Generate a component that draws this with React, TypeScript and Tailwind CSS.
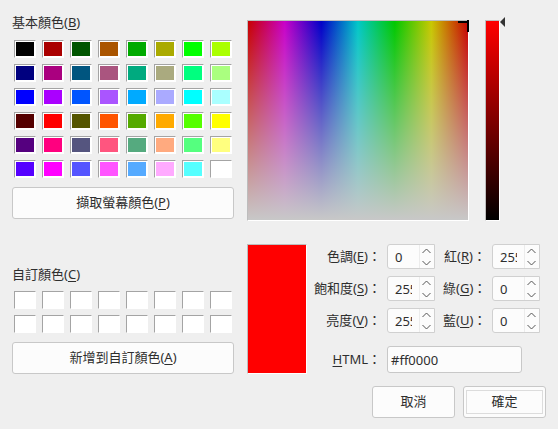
const FONT = "font-['Noto_Sans','Noto_Sans_CJK_TC',sans-serif]";

const basic = [
  '#000000', '#aa0000', '#005500', '#aa5500', '#00aa00', '#aaaa00', '#00ff00', '#aaff00',
  '#00007f', '#aa007f', '#00557f', '#aa557f', '#00aa7f', '#aaaa7f', '#00ff7f', '#aaff7f',
  '#0000ff', '#aa00ff', '#0055ff', '#aa55ff', '#00aaff', '#aaaaff', '#00ffff', '#aaffff',
  '#550000', '#ff0000', '#555500', '#ff5500', '#55aa00', '#ffaa00', '#55ff00', '#ffff00',
  '#55007f', '#ff007f', '#55557f', '#ff557f', '#55aa7f', '#ffaa7f', '#55ff7f', '#ffff7f',
  '#5500ff', '#ff00ff', '#5555ff', '#ff55ff', '#55aaff', '#ffaaff', '#55ffff', '#ffffff',
];

function Cell({ color }: { color: string }) {
  return (
    <div className="w-[22px] h-[18px] border border-t-[#a4a4a4] border-l-[#a4a4a4] border-r-white border-b-white p-px bg-white">
      <div className="w-full h-full" style={{ backgroundColor: color }} />
    </div>
  );
}

function Btn({ children, className = '' }: { children: React.ReactNode; className?: string }) {
  return (
    <div className={`flex items-center justify-center bg-[#fcfcfc] border border-[#c8c8c8] rounded-[3px] text-[#2e2e2e] ${className}`}>
      {children}
    </div>
  );
}

function Mn({ children }: { children: React.ReactNode }) {
  return <span className="underline underline-offset-2 decoration-1">{children}</span>;
}

function Spin({ value }: { value: string }) {
  return (
    <div className="w-12 h-[25px] flex bg-[#fcfcfc] border border-[#d0d0d0] rounded-l-[3px] overflow-hidden">
      <div className="w-[24px] ml-[7px] overflow-hidden leading-[24px] text-[#2e2e2e] whitespace-nowrap">
        <div className="w-[17px] overflow-hidden">{value}</div>
      </div>
      <div className="flex-1 flex flex-col items-center justify-between border-l border-[#ececec] pt-[3px] pb-[2px] pr-px">
        <svg width="9" height="6" viewBox="0 0 9 6" fill="none" stroke="#555" strokeWidth="1"><path d="M0.5 5 L4.5 1 L8.5 5" /></svg>
        <svg width="9" height="6" viewBox="0 0 9 6" fill="none" stroke="#555" strokeWidth="1"><path d="M0.5 1 L4.5 5 L8.5 1" /></svg>
      </div>
    </div>
  );
}

function Field({ label, mn, value, labelW }: { label: string; mn: string; value: string; labelW: string }) {
  return (
    <div className="flex items-center h-[25px]">
      <div className={`${labelW} pr-[6px] text-right whitespace-nowrap text-[#2e2e2e]`}>
        {label}(<Mn>{mn}</Mn>)：
      </div>
      <Spin value={value} />
    </div>
  );
}

export default function App() {
  return (
    <div className={`${FONT} w-[558px] h-[429px] bg-[#efefef] text-[13px] overflow-hidden flex pl-3 pt-3`}>
      <div className="w-[222px] flex flex-col">
        <div className="h-5 leading-5 text-[#2e2e2e]">基本顏色(<Mn>B</Mn>)</div>
        <div className="grid grid-cols-[repeat(8,22px)] gap-x-[6px] gap-y-[6px] ml-0.5 mt-2">
          {basic.map((c, i) => <Cell key={i} color={c} />)}
        </div>
        <Btn className="h-8 mt-[9px]">擷取螢幕顏色(<Mn>P</Mn>)</Btn>
        <div className="h-5 leading-5 mt-[45px] text-[#2e2e2e]">自訂顏色(<Mn>C</Mn>)</div>
        <div className="grid grid-cols-[repeat(8,22px)] gap-x-[6px] gap-y-[6px] ml-0.5 mt-[7px]">
          {Array.from({ length: 16 }).map((_, i) => <Cell key={i} color="#ffffff" />)}
        </div>
        <Btn className="h-8 mt-[9px]">新增到自訂顏色(<Mn>A</Mn>)</Btn>
      </div>
      <div className="ml-[13px] flex flex-col pt-2">
        <div className="flex">
          <div className="relative w-[222px] h-[201px] border border-t-[#bdbdbd] border-l-[#bdbdbd] border-r-white border-b-white">
            <div className="w-full h-full bg-[linear-gradient(to_bottom,transparent,#c8c8c8),linear-gradient(to_right,#c80000,#c800c8_16.67%,#0000c8_33.33%,#00c8c8_50%,#00c800_66.67%,#c8c800_83.33%,#c80000)]" />
            <div className="absolute right-[-1px] top-[-1px] w-[11px] h-[2px] mt-px bg-black" />
            <div className="absolute right-[-1px] top-[-1px] w-[2px] h-3 bg-black" />
          </div>
          <div className="relative ml-4 w-[15px] h-[201px] border border-t-[#bdbdbd] border-l-[#bdbdbd] border-r-white border-b-white">
            <div className="w-full h-full bg-[linear-gradient(to_bottom,#ff0000,#000000)]" />
            <svg className="absolute left-[14px] top-[-4px]" width="6" height="10" viewBox="0 0 6 10"><path d="M0 5 L5 0 V10 Z" fill="#333" /></svg>
          </div>
        </div>
        <div className="flex mt-[23px]">
          <div className="w-[60px] h-[130px] bg-[#ff0000] border border-t-[#bdbdbd] border-l-[#bdbdbd] border-r-white border-b-white" />
          <div className="flex flex-col ml-[6px]">
            <div className="flex">
              <div className="flex flex-col gap-[7px]">
                <Field label="色調" mn="E" value="0" labelW="w-[74px]" />
                <Field label="飽和度" mn="S" value="255" labelW="w-[74px]" />
                <Field label="亮度" mn="V" value="255" labelW="w-[74px]" />
              </div>
              <div className="flex flex-col gap-[7px] ml-2">
                <Field label="紅" mn="R" value="255" labelW="w-[49px]" />
                <Field label="綠" mn="G" value="0" labelW="w-[49px]" />
                <Field label="藍" mn="U" value="0" labelW="w-[49px]" />
              </div>
            </div>
            <div className="flex items-center mt-[13px]">
              <div className="w-[74px] pr-[6px] text-right whitespace-nowrap text-[#2e2e2e]"><Mn>H</Mn>TML：</div>
              <div className="w-[135px] h-[27px] bg-[#fcfcfc] border border-[#c8c8c8] rounded-[3px] pl-[3px] leading-[26px] text-[#2e2e2e]">#ff0000</div>
            </div>
          </div>
        </div>
        <div className="flex justify-end gap-2 mt-[12px] w-[299px]">
          <Btn className="w-[83px] h-8">取消</Btn>
          <div className="w-[83px] h-8 px-[2px] py-[3px] bg-[#fcfcfc] border border-[#c8c8c8] rounded-[3px]">
            <div className="w-full h-full flex items-center justify-center border border-[#dcdcdc] text-[#2e2e2e]">確定</div>
          </div>
        </div>
      </div>
    </div>
  );
}
